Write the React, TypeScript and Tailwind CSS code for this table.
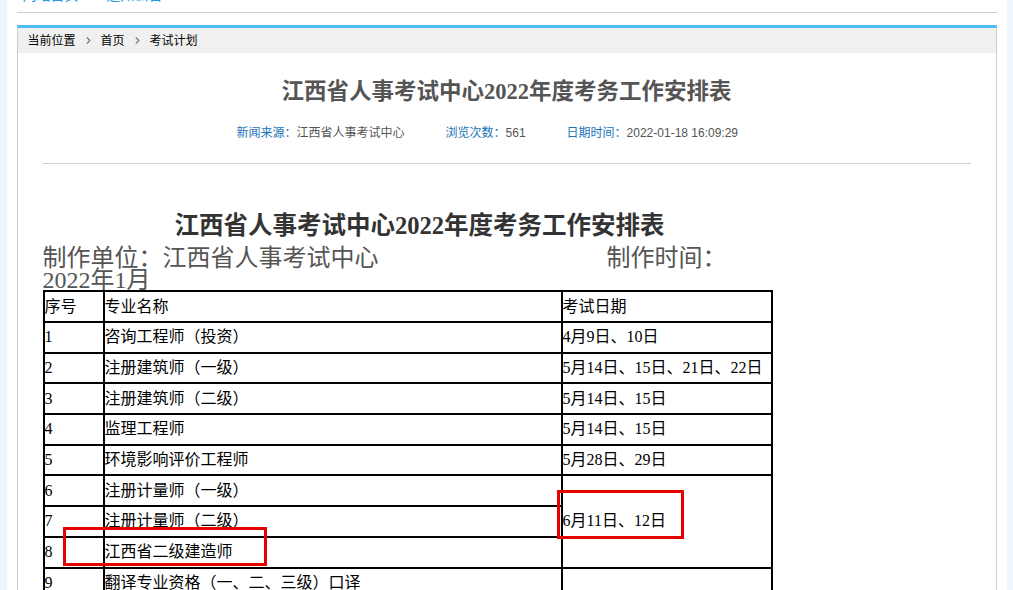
import { ChevronRight } from "lucide-react";

interface ExamRow {
  no: string;
  name: string;
  date?: string;
  span?: number;
}

const rows: ExamRow[] = [
  { no: "1", name: "咨询工程师（投资）", date: "4月9日、10日" },
  { no: "2", name: "注册建筑师（一级）", date: "5月14日、15日、21日、22日" },
  { no: "3", name: "注册建筑师（二级）", date: "5月14日、15日" },
  { no: "4", name: "监理工程师", date: "5月14日、15日" },
  { no: "5", name: "环境影响评价工程师", date: "5月28日、29日" },
  { no: "6", name: "注册计量师（一级）", date: "6月11日、12日", span: 3 },
  { no: "7", name: "注册计量师（二级）" },
  { no: "8", name: "江西省二级建造师" },
  { no: "9", name: "翻译专业资格（一、二、三级）口译", date: "" },
];

const serif = "font-['Liberation_Serif','Noto_Sans_CJK_SC',serif]";

export default function App() {
  return (
    <div className="min-h-screen bg-[#eef6fd] font-['Liberation_Sans','Noto_Sans_CJK_SC',sans-serif]">
      <div className="w-[1000px] mx-auto bg-white min-h-screen">
        {/* top nav (scrolled off) */}
        <div className="h-[12px] overflow-hidden mx-[10px] border-b border-[#cccccc] box-content">
          <div className="-mt-[13px] h-[16px] leading-[16px] text-[14px] text-[#1e9be8] flex pl-[6px] gap-[28px]">
            <span>网站首页</span>
            <span>通知公告</span>
          </div>
        </div>

        {/* article panel */}
        <div className="mt-[12px] mx-[10px] border-x border-[#cccccc] border-t-[3px] border-t-[#4fbdf5]">
          <div className="h-[25px] bg-[#f0f0f0] pl-[10px] flex items-center text-[12px] text-black">
            <span>当前位置</span>
            <ChevronRight className="w-[11px] h-[11px] mx-[7px] text-[#777]" strokeWidth={2.5} />
            <span>首页</span>
            <ChevronRight className="w-[11px] h-[11px] mx-[7px] text-[#777]" strokeWidth={2.5} />
            <span>考试计划</span>
          </div>

          <h1 className={`mt-[24px] text-center text-[22.5px] leading-[30px] font-bold text-[#555] ${serif}`}>
            江西省人事考试中心2022年度考务工作安排表
          </h1>

          <div className="mt-[16px] h-[20px] flex items-center text-[12px] text-[#555] pl-[219px]">
            <span className="text-[#1a72b8]">新闻来源：</span>
            <span>江西省人事考试中心</span>
            <span className="ml-[41px] text-[#1a72b8]">浏览次数：</span>
            <span>561</span>
            <span className="ml-[41px] text-[#1a72b8]">日期时间：</span>
            <span>2022-01-18 16:09:29</span>
          </div>

          <div className="mt-[20px] mx-[25px] border-t border-[#d0d0d0]" />

          {/* article body */}
          <div className={`px-[25px] ${serif}`}>
            <h2 className="mt-[47px] pl-[132px] text-[24.5px] leading-[30px] font-bold text-[#333]">
              江西省人事考试中心2022年度考务工作安排表
            </h2>
            <div className="mt-[6px] text-[24px] leading-[22px] text-[#555]">
              <div className="flex">
                <span>制作单位：江西省人事考试中心</span>
                <span className="ml-[228px]">制作时间：</span>
              </div>
              <div>2022年1月</div>
            </div>

            <div className="relative -mt-[1px]">
              <table className="w-[728px] border-collapse border-2 border-black text-[16px] text-black table-fixed">
                <colgroup>
                  <col className="w-[60px]" />
                  <col className="w-[458px]" />
                  <col className="w-[210px]" />
                </colgroup>
                <tbody>
                  <tr className="h-[31px]">
                    <td className="border-2 border-black p-0 align-middle">序号</td>
                    <td className="border-2 border-black p-0 align-middle">专业名称</td>
                    <td className="border-2 border-black p-0 align-middle">考试日期</td>
                  </tr>
                  {rows.map((r) => (
                    <tr key={r.no} className="h-[30.7px]">
                      <td className="border-2 border-black p-0 align-middle">{r.no}</td>
                      <td className="border-2 border-black p-0 align-middle whitespace-nowrap">{r.name}</td>
                      {r.date !== undefined && (
                        <td rowSpan={r.span ?? 1} className="border-2 border-black p-0 align-middle whitespace-nowrap">
                          {r.date}
                        </td>
                      )}
                    </tr>
                  ))}
                </tbody>
              </table>

              {/* red annotation boxes */}
              <div className="absolute left-[20px] top-[237px] w-[204px] h-[39px] border-[3px] border-[#e60000] pointer-events-none" />
              <div className="absolute left-[514px] top-[200px] w-[127px] h-[49px] border-[3px] border-[#e60000] pointer-events-none" />
            </div>
          </div>
          <div className="h-[40px]" />
        </div>
      </div>
    </div>
  );
}
